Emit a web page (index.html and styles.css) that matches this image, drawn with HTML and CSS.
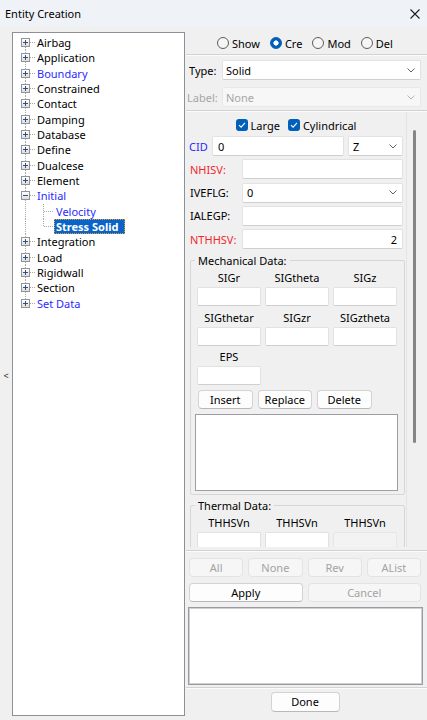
FILE: index.html
```html
<!DOCTYPE html>
<html>
<head>
<meta charset="utf-8">
<title>Entity Creation</title>
<link rel="stylesheet" href="styles.css">
</head>
<body>
<div class="window">
  <header class="titlebar">
    <span class="title">Entity Creation</span>
    <svg class="close" width="10" height="10" viewBox="0 0 10 10"><path d="M0.5 0.5L9.5 9.5M9.5 0.5L0.5 9.5" stroke="#1c1c1c" stroke-width="1.1" fill="none"/></svg>
  </header>
  <div class="main">
    <div class="collapse">&lt;</div>
    <ul class="tree">
      <li class="node first"><span class="exp"></span><span class="dots"></span><span class="lbl">Airbag</span></li>
      <li class="node"><span class="exp"></span><span class="dots"></span><span class="lbl">Application</span></li>
      <li class="node"><span class="exp"></span><span class="dots"></span><span class="lbl blue">Boundary</span></li>
      <li class="node"><span class="exp"></span><span class="dots"></span><span class="lbl">Constrained</span></li>
      <li class="node"><span class="exp"></span><span class="dots"></span><span class="lbl">Contact</span></li>
      <li class="node"><span class="exp"></span><span class="dots"></span><span class="lbl">Damping</span></li>
      <li class="node"><span class="exp"></span><span class="dots"></span><span class="lbl">Database</span></li>
      <li class="node"><span class="exp"></span><span class="dots"></span><span class="lbl">Define</span></li>
      <li class="node"><span class="exp"></span><span class="dots"></span><span class="lbl">Dualcese</span></li>
      <li class="node"><span class="exp"></span><span class="dots"></span><span class="lbl">Element</span></li>
      <li class="node"><span class="exp open"></span><span class="dots"></span><span class="lbl blue">Initial</span></li>
      <li class="node child"><span class="dots long"></span><span class="lbl blue">Velocity</span></li>
      <li class="node child lastchild"><span class="dots long"></span><span class="lbl selected">Stress Solid</span></li>
      <li class="node"><span class="exp"></span><span class="dots"></span><span class="lbl">Integration</span></li>
      <li class="node"><span class="exp"></span><span class="dots"></span><span class="lbl">Load</span></li>
      <li class="node"><span class="exp"></span><span class="dots"></span><span class="lbl">Rigidwall</span></li>
      <li class="node"><span class="exp"></span><span class="dots"></span><span class="lbl">Section</span></li>
      <li class="node last"><span class="exp"></span><span class="dots"></span><span class="lbl blue">Set Data</span></li>
    </ul>
    <section class="panel">
      <div class="modes">
        <label class="radio"><span class="circle"></span>Show</label>
        <label class="radio"><span class="circle on"></span>Cre</label>
        <label class="radio"><span class="circle"></span>Mod</label>
        <label class="radio"><span class="circle"></span>Del</label>
      </div>
      <div class="sep"></div>
      <div class="toprow type-row">
        <span class="toplabel">Type:</span>
        <div class="select wide"><span class="val">Solid</span><svg class="chev" width="8" height="5" viewBox="0 0 8 5"><path d="M0.5 0.5L4 4L7.5 0.5" stroke="#5f5f5f" fill="none"/></svg></div>
      </div>
      <div class="toprow label-row">
        <span class="toplabel muted">Label:</span>
        <div class="select wide disabled"><span class="val">None</span><svg class="chev" width="8" height="5" viewBox="0 0 8 5"><path d="M0.5 0.5L4 4L7.5 0.5" stroke="#b5b5b5" fill="none"/></svg></div>
      </div>
      <div class="sep sep2"></div>
      <div class="scroll">
        <div class="content">
          <div class="checks">
            <label class="check"><span class="box"><svg width="12" height="12" viewBox="0 0 12 12"><path d="M3 6.2L5.1 8.2L9 3.9" stroke="#fff" stroke-width="1.1" fill="none"/></svg></span>Large</label>
            <label class="check"><span class="box"><svg width="12" height="12" viewBox="0 0 12 12"><path d="M3 6.2L5.1 8.2L9 3.9" stroke="#fff" stroke-width="1.1" fill="none"/></svg></span>Cylindrical</label>
          </div>
          <div class="field first-field">
            <span class="flabel cid blue">CID</span>
            <div class="input cidin">0</div>
            <div class="select zsel"><span class="val">Z</span><svg class="chev" width="8" height="5" viewBox="0 0 8 5"><path d="M0.5 0.5L4 4L7.5 0.5" stroke="#5f5f5f" fill="none"/></svg></div>
          </div>
          <div class="field">
            <span class="flabel red">NHISV:</span>
            <div class="input grow"></div>
          </div>
          <div class="field">
            <span class="flabel">IVEFLG:</span>
            <div class="select grow"><span class="val">0</span><svg class="chev" width="8" height="5" viewBox="0 0 8 5"><path d="M0.5 0.5L4 4L7.5 0.5" stroke="#5f5f5f" fill="none"/></svg></div>
          </div>
          <div class="field">
            <span class="flabel">IALEGP:</span>
            <div class="input grow"></div>
          </div>
          <div class="field">
            <span class="flabel red">NTHHSV:</span>
            <div class="input grow right">2</div>
          </div>
          <fieldset class="group mech">
            <legend>Mechanical Data:</legend>
            <div class="grid">
              <div class="cell"><span class="head">SIGr</span><div class="input small"></div></div>
              <div class="cell"><span class="head">SIGtheta</span><div class="input small"></div></div>
              <div class="cell"><span class="head">SIGz</span><div class="input small"></div></div>
              <div class="cell"><span class="head">SIGthetar</span><div class="input small"></div></div>
              <div class="cell"><span class="head">SIGzr</span><div class="input small"></div></div>
              <div class="cell"><span class="head">SIGztheta</span><div class="input small"></div></div>
              <div class="cell"><span class="head">EPS</span><div class="input small"></div></div>
            </div>
            <div class="btnrow">
              <button class="btn">Insert</button>
              <button class="btn">Replace</button>
              <button class="btn">Delete</button>
            </div>
            <div class="listbox"></div>
          </fieldset>
          <fieldset class="group therm">
            <legend>Thermal Data:</legend>
            <div class="grid">
              <div class="cell"><span class="head">THHSVn</span><div class="input small"></div></div>
              <div class="cell"><span class="head">THHSVn</span><div class="input small"></div></div>
              <div class="cell"><span class="head">THHSVn</span><div class="input small off"></div></div>
            </div>
          </fieldset>
        </div>
        <div class="track"><div class="thumb"></div></div>
      </div>
      <div class="sep sep3"></div>
      <div class="actions four">
        <button class="btn dis">All</button>
        <button class="btn dis">None</button>
        <button class="btn dis">Rev</button>
        <button class="btn dis">AList</button>
      </div>
      <div class="actions two">
        <button class="btn">Apply</button>
        <button class="btn dis">Cancel</button>
      </div>
      <div class="textbox"></div>
      <div class="sep sep4"></div>
      <div class="donerow"><button class="btn done">Done</button></div>
    </section>
  </div>
</div>
</body>
</html>
```
FILE: styles.css
```css
* { box-sizing: border-box; }
html, body { margin: 0; padding: 0; }
body {
  width: 427px;
  height: 720px;
  overflow: hidden;
  background: #f0f0f0;
  font-family: "Noto Sans", "Open Sans", sans-serif;
  font-size: 11px;
  color: #000;
}
.window { display: flex; flex-direction: column; height: 720px; }

.titlebar {
  height: 27px;
  flex: none;
  background: #eff3f8;
  display: flex;
  align-items: center;
  justify-content: space-between;
  padding: 0 7px 0 5px;
}
.title { line-height: 15px; }

.main { flex: 1; display: flex; min-height: 0; }
.collapse {
  width: 12px;
  flex: none;
  display: flex;
  align-items: center;
  justify-content: center;
  font-size: 9px;
  color: #222;
  padding-top: 4px;
}

/* tree */
.tree {
  width: 173px;
  flex: none;
  margin: 5px 0 4px;
  padding: 2px 0 0;
  list-style: none;
  background: #fff;
  border: 1px solid #8c9098;
}
.node {
  height: 15.33px;
  display: flex;
  align-items: center;
  padding-left: 8px;
  white-space: nowrap;
  line-height: 15px;
  background: repeating-linear-gradient(to bottom, #a8a8a8 0 1px, transparent 1px 2px) 12px 0 / 1px 100% no-repeat;
}
.node.first { background-position: 12px 100%; background-size: 1px 50%; }
.node.last { background-position: 12px 0; background-size: 1px 50%; }
.node.child {
  padding-left: 30px;
  background:
    repeating-linear-gradient(to bottom, #a8a8a8 0 1px, transparent 1px 2px) 12px 0 / 1px 100% no-repeat,
    repeating-linear-gradient(to bottom, #a8a8a8 0 1px, transparent 1px 2px) 30px 0 / 1px 100% no-repeat;
}
.node.child.lastchild {
  background:
    repeating-linear-gradient(to bottom, #a8a8a8 0 1px, transparent 1px 2px) 12px 0 / 1px 100% no-repeat,
    repeating-linear-gradient(to bottom, #a8a8a8 0 1px, transparent 1px 2px) 30px 0 / 1px 50% no-repeat;
}
.exp {
  width: 9px;
  height: 9px;
  flex: none;
  border: 1px solid #949494;
  background:
    linear-gradient(#2f4f86, #2f4f86) center / 5px 1px no-repeat,
    linear-gradient(#2f4f86, #2f4f86) center / 1px 5px no-repeat,
    linear-gradient(#ffffff, #dedede);
}
.exp.open {
  background:
    linear-gradient(#2f4f86, #2f4f86) center / 5px 1px no-repeat,
    linear-gradient(#ffffff, #dedede);
}
.dots {
  width: 6px;
  height: 1px;
  flex: none;
  margin-right: 1px;
  background: repeating-linear-gradient(to right, #a8a8a8 0 1px, transparent 1px 2px);
}
.dots.long { width: 10px; margin-right: 0; margin-left: 1px; }
.lbl { padding: 0 2px 0 0; }
.child .lbl { padding: 0 3px 0 2px; }
.blue { color: #2a2aff; }
.red { color: #f0282d; }
.lbl.selected {
  background: #0a64c8;
  color: #fff;
  font-weight: bold;
  height: 15px;
  line-height: 15px;
  padding: 0 7px 0 2px;
  outline: 1px dotted #e0a030;
  outline-offset: -1px;
}

/* right panel */
.panel {
  flex: 1;
  min-width: 0;
  display: flex;
  flex-direction: column;
  padding-left: 1px;
}
.modes {
  height: 27px;
  flex: none;
  display: flex;
  align-items: center;
  padding: 5px 0 0 31px;
}
.radio { display: flex; align-items: center; gap: 3px; margin-right: 10px; line-height: 15px; }
.circle {
  width: 12px;
  height: 12px;
  border-radius: 50%;
  border: 1px solid #5d5d5d;
  background: #f6f6f6;
  flex: none;
}
.circle.on {
  border-color: #005fb8;
  background: radial-gradient(circle, #fff 0 2.3px, #005fb8 2.9px);
}
.sep {
  flex: none;
  height: 2px;
  border-top: 1px solid #d2d2d2;
  border-bottom: 1px solid #fbfbfb;
}
.toprow {
  flex: none;
  height: 20px;
  display: flex;
  align-items: center;
  padding: 0 6px 0 3px;
}
.type-row { margin-top: 4px; }
.label-row { margin-top: 7px; padding-left: 1px; }
.toplabel { width: 33px; flex: none; }
.label-row .toplabel { width: 35px; }
.muted { color: #a6a6a6; }
.sep2 { margin-top: 3px; }

.select, .input {
  height: 20px;
  background: #fff;
  border: 1px solid #e2e2e2;
  border-bottom-color: #cfcfcf;
  border-radius: 2px;
  display: flex;
  align-items: center;
  line-height: 15px;
}
.select { justify-content: space-between; padding: 0 5px 0 3px; }
.select.wide { flex: 1; }
.select.disabled { background: #f7f7f7; border-color: #e8e8e8; color: #a6a6a6; }
.chev { flex: none; }

/* scroll region */
.scroll {
  flex: none;
  height: 435px;
  display: flex;
  overflow: hidden;
}
.content {
  width: 221px;
  flex: none;
  border-right: 1px solid #e4e4e4;
  overflow: hidden;
}
.track { flex: 1; }
.thumb {
  width: 3px;
  height: 313px;
  margin: 18px 0 0 6px;
  background: #858585;
  border-radius: 2px;
}
.checks {
  margin-top: 4px;
  height: 18px;
  display: flex;
  justify-content: center;
  align-items: center;
  gap: 8px;
}
.check { display: flex; align-items: center; gap: 3px; line-height: 15px; }
.box {
  width: 12px;
  height: 12px;
  border-radius: 3px;
  background: #005fb8;
  display: flex;
}
.field {
  margin: 3.25px 3px 0;
  height: 20px;
  display: flex;
  align-items: center;
}
.field.first-field { margin-top: 2px; }
.flabel { width: 53px; flex: none; padding-left: 1px; }
.flabel.cid { width: 23px; padding-left: 0; }
.input { padding: 0 5px 0 5px; }
.cidin { width: 132px; flex: none; }
.zsel { width: 55px; margin-left: 4px; flex: none; padding-left: 4px; }
.grow { flex: 1; }
.field .select.grow { padding-left: 4px; }
.right { justify-content: flex-end; }

.group {
  margin: 4px 1px 0 4px;
  padding: 2px 6px 3px 4px;
  border: 1px solid #d6d6d6;
  border-radius: 2px;
  min-width: 0;
}
.group legend { padding: 0 3px; line-height: 15px; }
.grid {
  margin-left: 2px;
  display: grid;
  grid-template-columns: repeat(3, 64px);
  column-gap: 4px;
  row-gap: 3.5px;
}
.cell { display: flex; flex-direction: column; gap: 2px; }
.head { text-align: center; line-height: 15px; height: 15px; }
.input.small { height: 19px; }
.input.off { background: #f3f3f3; border-color: #e6e6e6; }
.btnrow {
  margin: 5px 0 0 3px;
  display: flex;
  gap: 5px;
}
.btn {
  font: inherit;
  color: #000;
  height: 19px;
  padding: 0;
  background: #fdfdfd;
  border: 1px solid #d3d3d3;
  border-bottom-color: #b9b9b9;
  border-radius: 4px;
  line-height: 15px;
}
.btnrow .btn { width: 54.5px; }
.btn.dis { background: #f6f6f6; border-color: #e3e3e3; color: #a3a3a3; }
.listbox {
  margin-top: 4.5px;
  height: 77px;
  background: #fff;
  border: 1px solid #9d9da3;
}
.therm { margin-top: 3.5px; }

/* bottom */
.sep3 { margin-top: 3px; }
.actions {
  flex: none;
  display: flex;
  gap: 5px;
  padding: 0 6px 0 3px;
}
.actions .btn { flex: 1; }
.four { margin-top: 6px; }
.four .btn { height: 18.5px; }
.two { margin-top: 6px; }
.two .btn { height: 19.5px; }
.textbox {
  flex: none;
  margin: 5px 4px 0 2px;
  height: 78px;
  background: #fff;
  border: 1px solid #9a9aa0;
  box-shadow: inset 0 0 0 1px #d0d0d4;
}
.sep4 { margin-top: 2px; }
.donerow {
  flex: none;
  display: flex;
  justify-content: center;
  padding-right: 3px;
  margin-top: 3px;
}
.btn.done { width: 69px; height: 19.5px; }
```
